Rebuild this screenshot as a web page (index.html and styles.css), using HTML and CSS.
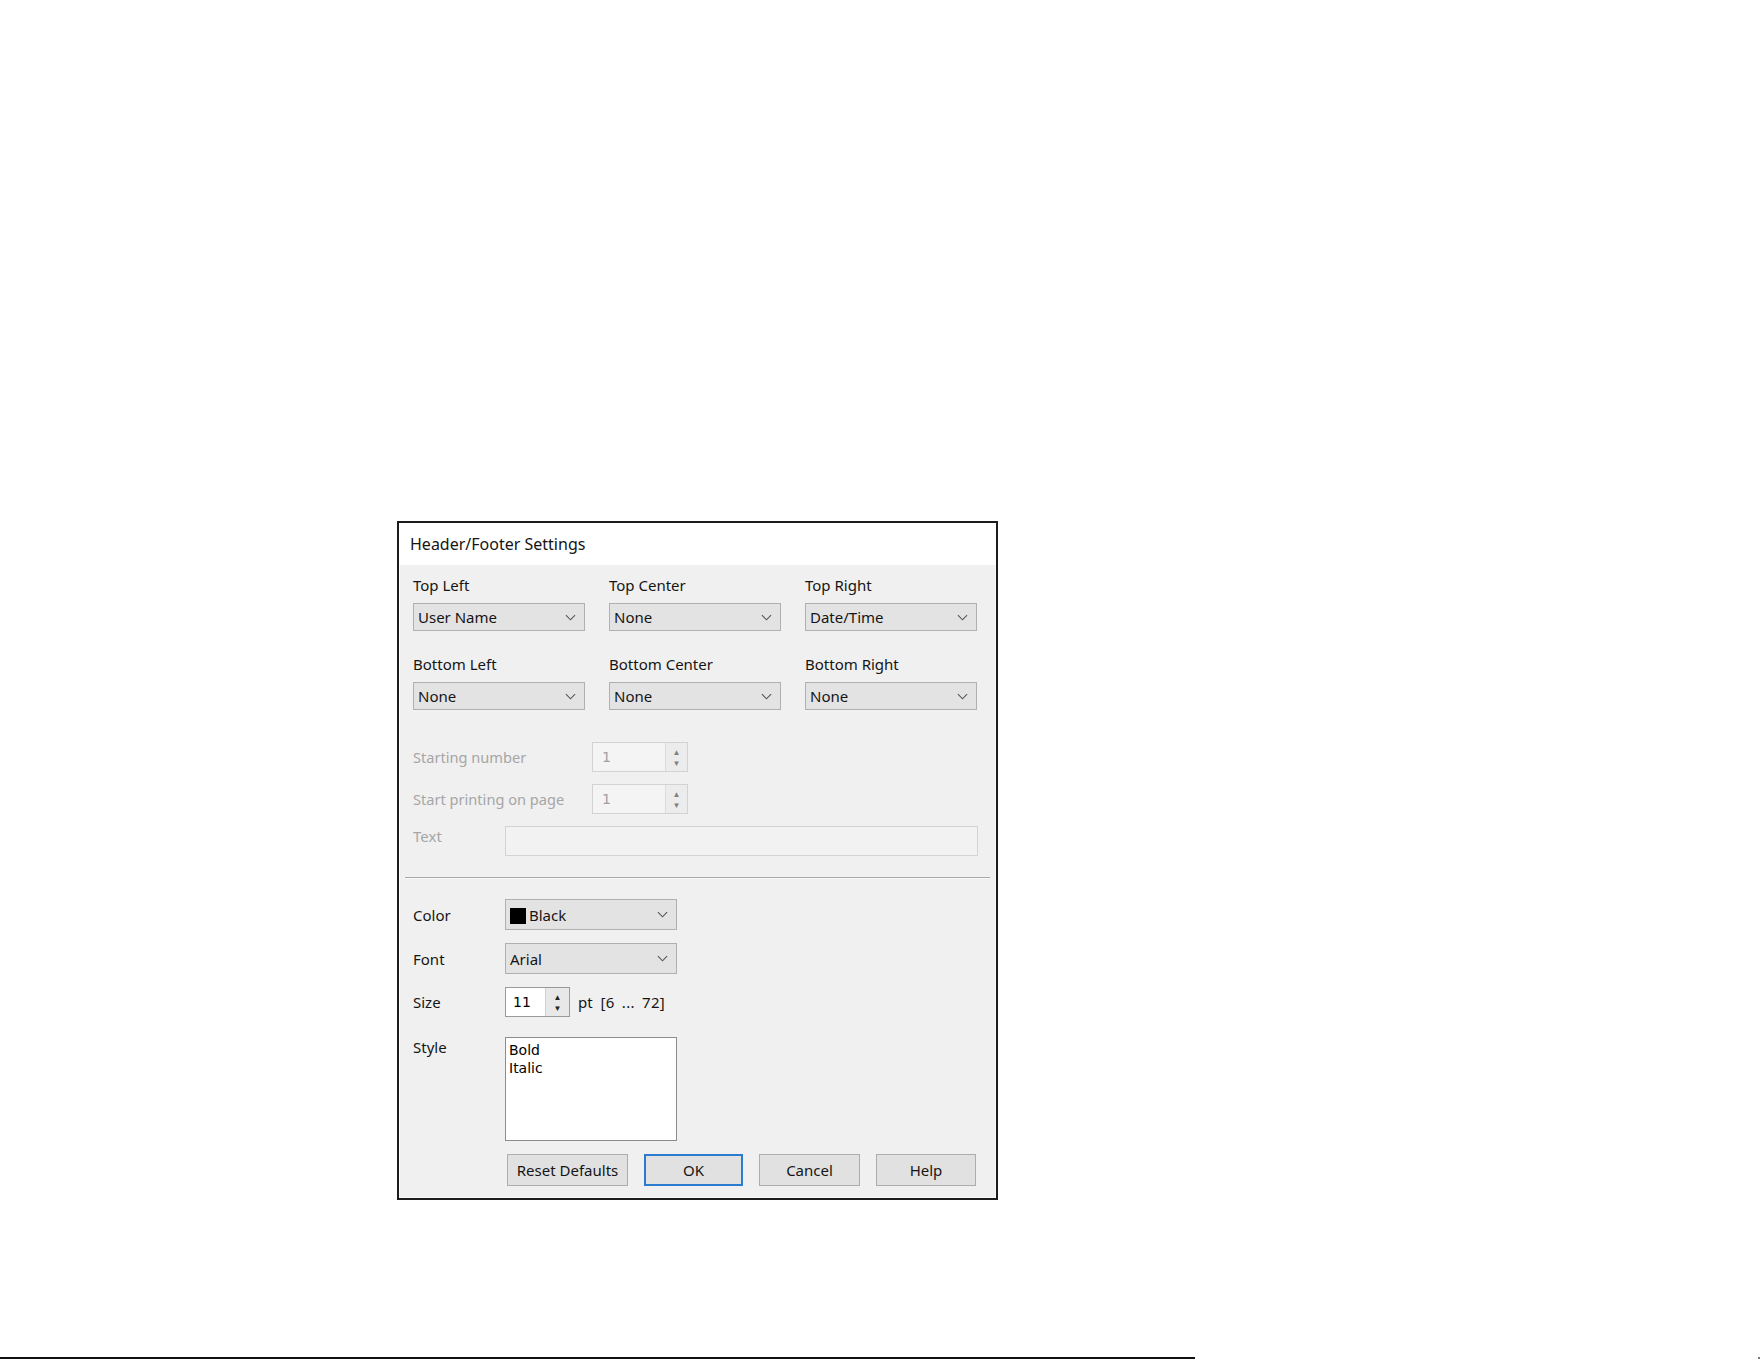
FILE: index.html
```html
<!DOCTYPE html>
<html lang="en">
<head>
  <meta charset="UTF-8" />
  <title>Header/Footer Settings</title>
  <link rel="stylesheet" href="styles.css">
</head>
<body>
  <div class="dialog">
    <div class="titlebar">Header/Footer Settings</div>

    <div class="content">
      <!-- Six header/footer slots -->
      <div class="positions">
        <div class="field">
          <span class="label">Top Left</span>
          <div class="select"><span>User Name</span><svg class="chev" viewBox="0 0 12 7"><path d="M1 1 L6 6 L11 1" /></svg></div>
        </div>
        <div class="field">
          <span class="label">Top Center</span>
          <div class="select"><span>None</span><svg class="chev" viewBox="0 0 12 7"><path d="M1 1 L6 6 L11 1" /></svg></div>
        </div>
        <div class="field">
          <span class="label">Top Right</span>
          <div class="select"><span>Date/Time</span><svg class="chev" viewBox="0 0 12 7"><path d="M1 1 L6 6 L11 1" /></svg></div>
        </div>
        <div class="field">
          <span class="label">Bottom Left</span>
          <div class="select"><span>None</span><svg class="chev" viewBox="0 0 12 7"><path d="M1 1 L6 6 L11 1" /></svg></div>
        </div>
        <div class="field">
          <span class="label">Bottom Center</span>
          <div class="select"><span>None</span><svg class="chev" viewBox="0 0 12 7"><path d="M1 1 L6 6 L11 1" /></svg></div>
        </div>
        <div class="field">
          <span class="label">Bottom Right</span>
          <div class="select"><span>None</span><svg class="chev" viewBox="0 0 12 7"><path d="M1 1 L6 6 L11 1" /></svg></div>
        </div>
      </div>

      <!-- Page numbering (disabled) -->
      <div class="numbering">
        <div class="row disabled">
          <span class="label wide">Starting number</span>
          <div class="spin off">
            <span class="value">1</span>
            <div class="arrows"><span>&#9650;</span><span>&#9660;</span></div>
          </div>
        </div>
        <div class="row disabled">
          <span class="label wide">Start printing on page</span>
          <div class="spin off">
            <span class="value">1</span>
            <div class="arrows"><span>&#9650;</span><span>&#9660;</span></div>
          </div>
        </div>
        <div class="row disabled top">
          <span class="label">Text</span>
          <div class="textbox"></div>
        </div>
      </div>

      <div class="sep"></div>

      <!-- Font settings -->
      <div class="font-settings">
        <div class="row">
          <span class="label">Color</span>
          <div class="select small"><span><i class="swatch"></i>Black</span><svg class="chev" viewBox="0 0 12 7"><path d="M1 1 L6 6 L11 1" /></svg></div>
        </div>
        <div class="row">
          <span class="label">Font</span>
          <div class="select small"><span>Arial</span><svg class="chev" viewBox="0 0 12 7"><path d="M1 1 L6 6 L11 1" /></svg></div>
        </div>
        <div class="row">
          <span class="label">Size</span>
          <div class="spin size">
            <span class="value">11</span>
            <div class="arrows"><span>&#9650;</span><span>&#9660;</span></div>
          </div>
          <span class="range">pt <span class="bounds">[6 ... 72]</span></span>
        </div>
        <div class="row top">
          <span class="label">Style</span>
          <div class="listbox">
            <div>Bold</div>
            <div>Italic</div>
          </div>
        </div>
      </div>

      <div class="buttons">
        <button class="btn reset">Reset Defaults</button>
        <button class="btn ok">OK</button>
        <button class="btn cancel">Cancel</button>
        <button class="btn help">Help</button>
      </div>
    </div>
  </div>

  <div class="baseline">
    <div class="rule"></div>
    <div class="dot"></div>
  </div>
</body>
</html>
```

FILE: styles.css
```css
* {
  margin: 0;
  padding: 0;
  box-sizing: border-box;
}

body {
  background: #fff;
  color: #151515;
  font-family: "Noto Sans", sans-serif;
  font-size: 15px;
  height: 1361px;
  overflow: hidden;
}

.dialog {
  margin: 521px 0 0 397px;
  width: 601px;
  height: 679px;
  border: 2px solid #1c1c1c;
  background: #f0f0f0;
  box-shadow: inset 0 0 0 1px #fafafa;
  display: flex;
  flex-direction: column;
}

.titlebar {
  height: 42px;
  background: #fff;
  padding-left: 11px;
  display: flex;
  align-items: center;
  font-size: 16px;
}

.content {
  padding: 10px 18px 12px 14px;
}

.label {
  line-height: 20px;
  white-space: nowrap;
}

/* header / footer slots */
.positions {
  display: grid;
  grid-template-columns: repeat(3, 172px);
  column-gap: 24px;
  row-gap: 23px;
}

.field {
  display: flex;
  flex-direction: column;
  gap: 8px;
}

.select {
  height: 28px;
  background: #e3e3e3;
  border: 1px solid #b0b0b0;
  display: flex;
  align-items: center;
  justify-content: space-between;
  padding: 0 8px 0 4px;
}

.select.small {
  width: 172px;
  height: 31px;
}

.chev {
  width: 11px;
  height: 7px;
  fill: none;
  stroke: #555;
  stroke-width: 1.2;
}

.swatch {
  display: inline-block;
  width: 16px;
  height: 16px;
  background: #000;
  vertical-align: -3px;
  margin-right: 3px;
}

/* rows with a label column */
.row {
  display: flex;
  align-items: center;
}

.row.top {
  align-items: flex-start;
}

.row .label {
  width: 92px;
  flex-shrink: 0;
}

.row .label.wide {
  width: 179px;
  font-size: 14.6px;
}

.numbering {
  margin-top: 32px;
  display: flex;
  flex-direction: column;
  gap: 12px;
}

.disabled {
  color: #a6a6a6;
}

.spin {
  display: flex;
  height: 30px;
  border: 1px solid #b8b8b8;
  background: #fff;
}

.spin .value {
  flex: 1;
  display: flex;
  align-items: center;
  font-family: "DejaVu Sans", sans-serif;
  font-size: 14px;
}

.spin .arrows {
  width: 22px;
  display: flex;
  flex-direction: column;
  justify-content: center;
  align-items: center;
  background: #e8e8e8;
  border-left: 1px solid #cfcfcf;
  font-size: 8px;
  line-height: 11px;
  color: #333;
}

.spin.off {
  width: 96px;
  border-color: #d2d2d2;
  background: #f4f4f4;
}

.spin.off .value {
  padding-left: 9px;
  color: #a0a0a0;
}

.spin.off .arrows {
  background: #ececec;
  border-left-color: #dcdcdc;
  color: #808080;
}

.spin.size {
  width: 65px;
  border-color: #9a9a9a;
}

.spin.size .value {
  padding-left: 7px;
  color: #000;
}

.spin.size .arrows {
  width: 24px;
  color: #222;
}

.range {
  margin-left: 8px;
}

.bounds {
  margin-left: 4px;
  word-spacing: 3px;
  letter-spacing: 0.3px;
}

.textbox {
  width: 473px;
  height: 30px;
  border: 1px solid #d4d4d4;
  background: #f2f2f2;
}

.sep {
  margin: 21px -12px 0 -8px;
  height: 2px;
  border-top: 1px solid #a9a9a9;
  border-bottom: 1px solid #fafafa;
}

.font-settings {
  margin-top: 20px;
  display: flex;
  flex-direction: column;
  gap: 13px;
}

.font-settings .row:last-child {
  margin-top: 7px;
}

.listbox {
  width: 172px;
  height: 104px;
  background: #fff;
  border: 1px solid #8c8c8c;
  padding: 3px 3px;
  font-family: "DejaVu Sans", sans-serif;
  font-size: 14px;
  line-height: 18px;
  color: #000;
}

/* dialog buttons */
.buttons {
  margin-top: 13px;
  padding-left: 94px;
  display: flex;
  gap: 16px;
}

.btn {
  height: 32px;
  background: #e1e1e1;
  border: 1px solid #adadad;
  font-family: "Noto Sans", sans-serif;
  font-size: 15px;
  color: #151515;
}

.btn.reset { width: 121px; }
.btn.ok { width: 99px; border: 2px solid #2b7bd1; }
.btn.cancel { width: 101px; }
.btn.help { width: 100px; }

/* page rule at the bottom */
.baseline {
  margin-top: 157px;
  display: flex;
  justify-content: space-between;
  align-items: flex-start;
}

.rule {
  width: 1195px;
  height: 2px;
  background: #111;
}

.dot {
  width: 2px;
  height: 2px;
  margin-right: 1px;
  background: #777;
}
```
